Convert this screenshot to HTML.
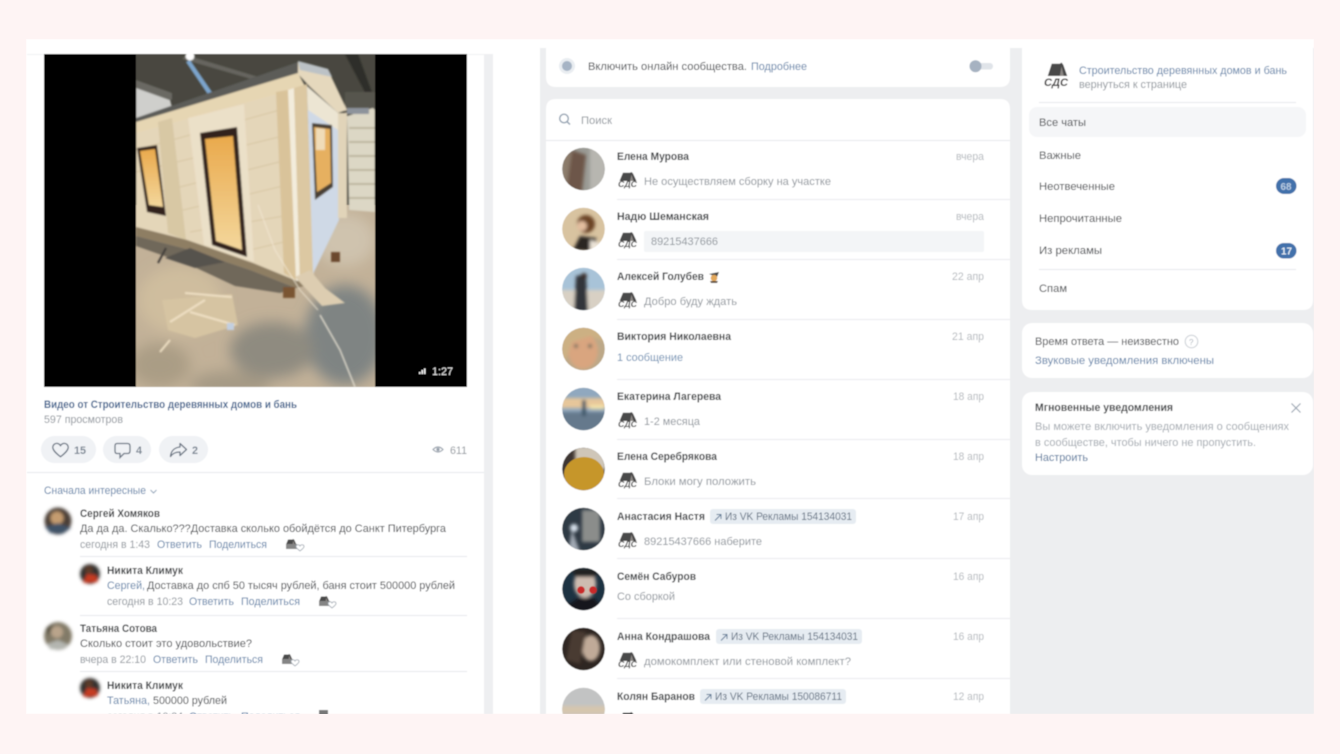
<!DOCTYPE html>
<html lang="ru"><head><meta charset="utf-8"><title>Сообщения сообщества</title>
<style>
html,body{margin:0;padding:0;width:1340px;height:754px;overflow:hidden;background:#fef4f4}
svg{display:block}
text{font-family:"Liberation Sans","Noto Sans CJK SC",sans-serif;font-size:11px;fill:#3c3f44}
.n{font-weight:bold;fill:#3a3d41}
.g{fill:#8f959c}
.l{fill:#b4b8bd}
.b{fill:#5d80a8}
.t{fill:#5f6e80}
.k{font-size:8px;font-weight:bold;font-style:italic;fill:#4a4848}
</style></head><body>
<svg width="1340" height="754" viewBox="0 0 1340 754" xmlns="http://www.w3.org/2000/svg">
<defs>
<filter id="s" x="-2%" y="-2%" width="104%" height="104%"><feGaussianBlur stdDeviation="0.42"/></filter>
<filter id="p" x="-5%" y="-5%" width="110%" height="110%"><feGaussianBlur stdDeviation="0.7"/></filter>
<filter id="w" x="-40%" y="-40%" width="180%" height="180%"><feGaussianBlur stdDeviation="7"/></filter>
<filter id="a" x="-20%" y="-20%" width="140%" height="140%"><feGaussianBlur stdDeviation="1.6"/></filter>
<clipPath id="ph"><rect x="136" y="54" width="239" height="333"/></clipPath>
<clipPath id="page"><rect x="26" y="39" width="1288" height="675"/></clipPath>
<linearGradient id="am" x1="0" y1="0" x2="0" y2="1"><stop offset="0" stop-color="#e9a94c"/><stop offset="1" stop-color="#f4d79c"/></linearGradient>
<g id="lg"><path d="M5 .8 12 .8 13.500 0 15 1.500 18.500 9H1.500z" fill="#4a4848"/><path d="M13.500 2.500 15.500 9H12z" fill="#8b8784"/></g>
</defs>

<g filter="url(#s)" clip-path="url(#page)">
<rect x="26" y="39" width="1288" height="675" fill="#fff"/>
<rect x="540" y="48" width="774" height="666" fill="#edeef0"/>
<rect x="484" y="54" width="9" height="660" fill="#eeeff1"/>
<rect x="27" y="54" width="457" height="1" fill="#f0f1f3"/>

<!-- Video -->
<rect x="44" y="54" width="423" height="333" fill="#000"/>
<g clip-path="url(#ph)">
<rect x="136" y="54" width="239" height="333" fill="#48473f"/>
<rect x="136" y="205" width="239" height="182" fill="#c2b198"/>
<g filter="url(#w)">
<ellipse cx="345" cy="335" rx="40" ry="50" fill="#7f8483"/>
<ellipse cx="272" cy="350" rx="42" ry="28" fill="#8f8b80"/>
<ellipse cx="160" cy="365" rx="30" ry="22" fill="#aa9d85"/>
<ellipse cx="345" cy="240" rx="30" ry="26" fill="#cfc3ae"/>
<ellipse cx="180" cy="300" rx="42" ry="34" fill="#cfbd9e"/>
<ellipse cx="230" cy="385" rx="40" ry="14" fill="#a59a85"/>
</g>
<g filter="url(#p)">
<path d="M136 80 172 93 172 100 136 88z" fill="#6a6963"/>
<path d="M136 88 170 100 172 108 136 120z" fill="#cfcfcc"/>
<path d="M186 55 262 78 258 81 182 59z" fill="#66655f"/>
<path d="M345 54 368 98 374 98 358 54z" fill="#2f2d29"/>
<path d="M190 60 214 95 209 96 186 62z" fill="#7ca4cc"/>
<circle cx="190" cy="56" r="4.500" fill="#fff"/>
<rect x="345" y="92" width="30" height="22" fill="#56544d"/>
<path d="M347 116 373 108 375 110 375 212 349 210z" fill="#dcd7c5"/>
<path d="M349 128H375M349 142H375M349 156H375M349 170H375M349 184H375M349 198H375" stroke="#a99f87" stroke-width="1.500" opacity=".8"/>
<rect x="347" y="108" width="22" height="6" fill="#8d939b"/>
<!-- roof -->
<path d="M136 118 298 62 298 74 136 124z" fill="#5b5c58"/>
<path d="M136 122 298 73 306 88 136 134z" fill="#e6d6b3"/>
<!-- wall -->
<path d="M136 133 306 86 314 278 297 281 253 263 187 240 136 227z" fill="#e4d6b9"/>
<path d="M136 150 287 108M136 172 287 135M160 192 287 160M175 212 287 185M190 232 290 215M250 250 292 240" stroke="#cdb88f" stroke-width="1" opacity=".55"/>
<path d="M158 122 172 118 186 240 168 233z" fill="#d8c8a4"/>
<path d="M188 118 244 104 254 262 204 245z" fill="#ebe0c8"/>
<path d="M276 92 288 90 298 281 284 273z" fill="#d9c39a"/>
<path d="M288 90 294 88 300 281 296 281z" fill="#f3ecdc"/>
<path d="M294 88 307 84 314 278 300 281z" fill="#dcc8a2"/>
<!-- side -->
<path d="M307 86 338 113 339 220 313 274z" fill="#cfd9e6"/>
<path d="M307 86 338 113 338 130 308 110z" fill="#ece5d3"/>
<!-- gable -->
<path d="M298 62 328 70 347 110 338 113 310 87 298 74z" fill="#e5d8bd"/>
<path d="M298 61 328 69 332 77 300 70z" fill="#bcc2c6"/>
<rect x="338" y="113" width="9" height="105" fill="#e1d4b9"/>
<!-- base -->
<path d="M136 227 187 240 253 263 297 281 314 278 314 284 296 288 250 270 190 250 136 236z" fill="#8e7e64"/>
<path d="M136 236 190 250 250 270 296 288 280 293 235 286 190 265 136 246z" fill="#6f675a"/>
<path d="M165 258 190 248 225 262 195 268z" fill="#57534e"/>
<!-- door, windows -->
<path d="M200 133 237 127 247 257 212 245z" fill="#33241a"/>
<path d="M205 139 233 136 242 250 216 241z" fill="url(#am)"/>
<path d="M137 148 157 145 166 216 147 212z" fill="#33241a"/>
<path d="M140 151 155 149 163 207 149 205z" fill="url(#am)"/>
<path d="M312 123 332 125 333 187 315 200z" fill="#4a4034"/>
<path d="M314 127 330 129 331 183 317 192z" fill="#e6b060"/>
<path d="M316 128 325 129 325 150 316 150z" fill="#f0dcb8"/>
<!-- floor details -->
<path d="M295 277 322 306 345 303 325 288 310 270z" fill="#ddcdb1"/>
<path d="M320 315 340 350 355 387" stroke="#e7e1d2" stroke-width="1.300" fill="none"/>
<path d="M258 205 275 250 300 290 318 310" stroke="#f2ead6" stroke-width="1" fill="none" opacity=".8"/>
<path d="M162 300 232 294 238 325 195 338 168 330z" fill="#d6c4a2"/>
<path d="M170 322 205 300M185 293 232 297M190 312 235 325M160 352 170 340" stroke="#efe0c4" stroke-width="2"/>
<rect x="227" y="323" width="7" height="7" fill="#c2cfe0"/>
<path d="M158 263 166 248" stroke="#3d3a37" stroke-width="2"/>
<rect x="283" y="287" width="12" height="11" fill="#7a5533"/><rect x="331" y="252" width="9" height="10" fill="#6c4a2e"/>
</g></g>
<path d="M419 374V372h1.500v2zM421.500 374V370H423v4zM424 374V368.500h1.500V374z" fill="#eee"/>
<text x="432" y="375" textLength="21" lengthAdjust="spacingAndGlyphs" style="fill:#eee">1:27</text>

<text x="44" y="408" textLength="253" lengthAdjust="spacingAndGlyphs" style="font-weight:bold;fill:#3f6490">Видео от Строительство деревянных домов и бань</text>
<text x="44" y="423" textLength="79" lengthAdjust="spacingAndGlyphs" class="g">597 просмотров</text>

<rect x="41" y="436" width="55" height="27" rx="13.500" fill="#f0f2f5"/>
<rect x="103" y="436" width="48" height="27" rx="13.500" fill="#f0f2f5"/>
<rect x="159" y="436" width="49" height="27" rx="13.500" fill="#f0f2f5"/>
<path d="M60.500 456.800C55 452.500 52.800 450 52.800 447.300 52.800 445 54.600 443.400 56.600 443.400 58.200 443.400 59.600 444.200 60.500 445.600 61.400 444.200 62.800 443.400 64.400 443.400 66.400 443.400 68.200 445 68.200 447.300 68.200 450 66 452.500 60.500 456.800Z" fill="none" stroke="#6a7583" stroke-width="1.300"/>
<text x="74" y="454" textLength="12" lengthAdjust="spacingAndGlyphs" style="fill:#7c8794;font-weight:bold">15</text>
<path d="M117 443.500H127.500Q130 443.500 130 446V451Q130 453.500 127.500 453.500H124L120 457.500V453.500H117Q115 453.500 115 451V446Q115 443.500 117 443.500Z" fill="none" stroke="#6a7583" stroke-width="1.300"/>
<text x="136" y="454" textLength="6" lengthAdjust="spacingAndGlyphs" style="fill:#7c8794;font-weight:bold">4</text>
<path d="M180 443.500 186.500 449.500 180 455.500V452C175.500 452 172.500 453.500 170.500 456.500 171 451 174.500 447.500 180 447Z" fill="none" stroke="#6a7583" stroke-width="1.300" stroke-linejoin="round"/>
<text x="192" y="454" textLength="6" lengthAdjust="spacingAndGlyphs" style="fill:#7c8794;font-weight:bold">2</text>
<path d="M433 449.500Q438 444.500 443 449.500 438 454.500 433 449.500Z" fill="none" stroke="#99a2ad" stroke-width="1.200"/><circle cx="438" cy="449.500" r="1.700" fill="#99a2ad"/>
<text x="450" y="454" textLength="17" lengthAdjust="spacingAndGlyphs" class="g">611</text>
<rect x="27" y="472" width="457" height="1" fill="#e7e8ec"/>

<!-- Comments -->
<text x="44" y="494" textLength="102" lengthAdjust="spacingAndGlyphs" class="b">Сначала интересные</text>
<path d="M150.500 490 153.500 493 156.500 490" fill="none" stroke="#8fa3b9" stroke-width="1"/>

<g filter="url(#a)"><circle cx="58" cy="521" r="13.500" fill="#4c4038"/><circle cx="57" cy="518" r="6.500" fill="#c59c70"/><path d="M45 527 58 523 71 528 62 534 50 533z" fill="#3f5368"/></g>
<text x="80" y="517" textLength="80" lengthAdjust="spacingAndGlyphs" class="n">Сергей Хомяков</text>
<text x="80" y="532" textLength="366" lengthAdjust="spacingAndGlyphs">Да да да. Скалько???Доставка сколько обойдётся до Санкт Питербурга</text>
<text x="80" y="548" textLength="70" lengthAdjust="spacingAndGlyphs" class="g">сегодня в 1:43</text>
<text x="157" y="548" textLength="45" lengthAdjust="spacingAndGlyphs" class="b">Ответить</text>
<text x="209" y="548" textLength="58" lengthAdjust="spacingAndGlyphs" class="b">Поделиться</text>
<use href="#lg" transform="translate(285 539) scale(.62)"/><rect x="286" y="544" width="11" height="5" fill="#858585"/>
<path d="M300 551C297.500 549 296 548 296 546.500 296 544.500 299 544 300 546 301 544 304 544.500 304 546.500 304 548 302.500 549 300 551Z" fill="#fff" stroke="#9aa3ad" stroke-width=".8"/>
<rect x="80" y="556" width="387" height="1" fill="#e7e8ec"/>

<g filter="url(#a)"><circle cx="90" cy="574" r="10" fill="#33302f"/><circle cx="89" cy="570" r="4" fill="#5c3a2c"/><path d="M83 583 87 574 96 575 98 582z" fill="#c63b20"/></g>
<text x="107" y="574" textLength="76" lengthAdjust="spacingAndGlyphs" class="n">Никита Климук</text>
<text x="107" y="589" textLength="38" lengthAdjust="spacingAndGlyphs" class="b">Сергей,</text>
<text x="147" y="589" textLength="308" lengthAdjust="spacingAndGlyphs">Доставка до спб 50 тысяч рублей, баня стоит 500000 рублей</text>
<text x="107" y="605" textLength="76" lengthAdjust="spacingAndGlyphs" class="g">сегодня в 10:23</text>
<text x="189" y="605" textLength="45" lengthAdjust="spacingAndGlyphs" class="b">Ответить</text>
<text x="241" y="605" textLength="59" lengthAdjust="spacingAndGlyphs" class="b">Поделиться</text>
<use href="#lg" transform="translate(318 596) scale(.62)"/><rect x="319" y="601" width="11" height="5" fill="#858585"/>
<path d="M332 608C329.500 606 328 605 328 603.500 328 601.500 331 601 332 603 333 601 336 601.500 336 603.500 336 605 334.500 606 332 608Z" fill="#fff" stroke="#9aa3ad" stroke-width=".8"/>
<rect x="80" y="615" width="387" height="1" fill="#e7e8ec"/>

<g filter="url(#a)"><circle cx="58" cy="636" r="14" fill="#827a68"/><circle cx="57" cy="632" r="6" fill="#b9a48b"/><path d="M47 644 58 640 69 645 60 650 50 649z" fill="#b4b6b0"/><path d="M46 628 54 623 48 636z" fill="#54503f"/></g>
<text x="80" y="632" textLength="77" lengthAdjust="spacingAndGlyphs" class="n">Татьяна Сотова</text>
<text x="80" y="647" textLength="172" lengthAdjust="spacingAndGlyphs">Сколько стоит это удовольствие?</text>
<text x="80" y="663" textLength="66" lengthAdjust="spacingAndGlyphs" class="g">вчера в 22:10</text>
<text x="153" y="663" textLength="45" lengthAdjust="spacingAndGlyphs" class="b">Ответить</text>
<text x="205" y="663" textLength="58" lengthAdjust="spacingAndGlyphs" class="b">Поделиться</text>
<use href="#lg" transform="translate(281 654) scale(.62)"/><rect x="282" y="659" width="11" height="5" fill="#858585"/>
<path d="M295 666C292.500 664 291 663 291 661.500 291 659.500 294 659 295 661 296 659 299 659.500 299 661.500 299 663 297.500 664 295 666Z" fill="#fff" stroke="#9aa3ad" stroke-width=".8"/>
<rect x="80" y="671" width="387" height="1" fill="#e7e8ec"/>

<g filter="url(#a)"><circle cx="90" cy="688" r="10" fill="#33302f"/><circle cx="89" cy="684" r="4" fill="#5c3a2c"/><path d="M83 697 87 688 96 689 98 696z" fill="#c63b20"/></g>
<text x="107" y="689" textLength="76" lengthAdjust="spacingAndGlyphs" class="n">Никита Климук</text>
<text x="107" y="704" textLength="43" lengthAdjust="spacingAndGlyphs" class="b">Татьяна,</text>
<text x="153" y="704" textLength="74" lengthAdjust="spacingAndGlyphs">500000 рублей</text>
<text x="107" y="720" textLength="76" lengthAdjust="spacingAndGlyphs" class="g">сегодня в 10:24</text>
<text x="189" y="720" textLength="45" lengthAdjust="spacingAndGlyphs" class="b">Ответить</text>
<text x="241" y="720" textLength="59" lengthAdjust="spacingAndGlyphs" class="b">Поделиться</text>
<rect x="319" y="710" width="9" height="6" fill="#777"/>

<!-- Online -->
<path d="M546 48H1010V77Q1010 87 1000 87H556Q546 87 546 77Z" fill="#fff"/>
<circle cx="567" cy="66" r="8" fill="#e9edf1"/><circle cx="567" cy="66" r="5" fill="#a6b4c5"/>
<text x="588" y="70" textLength="159" lengthAdjust="spacingAndGlyphs">Включить онлайн сообщества.</text>
<text x="751" y="70" textLength="56" lengthAdjust="spacingAndGlyphs" class="b">Подробнее</text>
<rect x="970" y="63" width="23" height="6.500" rx="3.200" fill="#e0e4e9"/><circle cx="975.500" cy="66.300" r="6" fill="#a6b2c1"/>

<!-- List -->
<path d="M546 714V109Q546 99 556 99H1000Q1010 99 1010 109V714Z" fill="#fff"/>
<circle cx="564" cy="118.500" r="4.300" fill="none" stroke="#93a1b1" stroke-width="1.400"/><path d="M567.200 121.800 570 124.500" stroke="#93a1b1" stroke-width="1.500"/>
<text x="581" y="124" textLength="31" lengthAdjust="spacingAndGlyphs" class="g">Поиск</text>
<rect x="546" y="140" width="464" height="1" fill="#e7e8ec"/>
<path d="M617 199.500H1010M617 259.500H1010M617 319.500H1010M617 379.500H1010M617 439.500H1010M617 498.500H1010M617 558.500H1010M617 618.500H1010M617 678.500H1010" stroke="#e9eaee" stroke-width="1"/>

<g><clipPath id="c1"><circle cx="583.500" cy="169" r="21.300"/></clipPath><g clip-path="url(#c1)"><rect x="560" y="146" width="48" height="46" fill="#9a9a94"/><g filter="url(#a)"><path d="M590 146H606V192H590z" fill="#b7b6b0"/><path d="M572 150 586 155 582 192 566 192z" fill="#6d5648"/><path d="M562 150H572L566 192H562z" fill="#8b7a6b"/></g></g></g>
<g><clipPath id="c2"><circle cx="583.500" cy="229" r="21.300"/></clipPath><g clip-path="url(#c2)"><rect x="560" y="206" width="48" height="46" fill="#d8c3a0"/><g filter="url(#a)"><circle cx="586" cy="224" r="9" fill="#6c4528"/><circle cx="582" cy="226" r="5" fill="#e3bd9f"/><path d="M573 250 580 236 596 238 598 252z" fill="#2c2520"/><path d="M590 240 608 245V252H590z" fill="#ece4d8"/></g></g></g>
<g><clipPath id="c3"><circle cx="583.500" cy="289" r="21.300"/></clipPath><g clip-path="url(#c3)"><rect x="560" y="266" width="48" height="46" fill="#a8c3d8"/><g filter="url(#a)"><rect x="560" y="290" width="48" height="22" fill="#d8d0c4"/><path d="M576 276 586 274 588 312 574 312z" fill="#33343a"/><circle cx="584" cy="276" r="3" fill="#3a2f2a"/></g></g></g>
<g><clipPath id="c4"><circle cx="583.500" cy="349" r="21.300"/></clipPath><g clip-path="url(#c4)"><rect x="560" y="326" width="48" height="46" fill="#bca888"/><g filter="url(#a)"><ellipse cx="583" cy="351" rx="15" ry="18" fill="#d9a57f"/><path d="M562 326H606V342L590 336 572 342 566 360H562z" fill="#ccb083"/><circle cx="576" cy="346" r="2" fill="#6f6d60"/><circle cx="590" cy="346" r="2" fill="#6f6d60"/></g></g></g>
<g><clipPath id="c5"><circle cx="583.500" cy="409" r="21.300"/></clipPath><g clip-path="url(#c5)"><rect x="560" y="386" width="48" height="46" fill="#90a8bf"/><g filter="url(#a)"><rect x="560" y="398" width="48" height="10" fill="#e6c69a"/><rect x="560" y="412" width="48" height="20" fill="#65798c"/><rect x="582" y="400" width="4" height="16" fill="#3f5668"/><rect x="590" y="405" width="14" height="4" fill="#f5e3a8"/></g></g></g>
<g><clipPath id="c6"><circle cx="583.500" cy="469" r="21.300"/></clipPath><g clip-path="url(#c6)"><rect x="560" y="446" width="48" height="46" fill="#3e3530"/><path d="M575 446H606V470H575z" fill="#cfc6b8" filter="url(#a)"/><ellipse cx="584" cy="474" rx="20" ry="17" fill="#c6962c"/></g></g>
<g><clipPath id="c7"><circle cx="583.500" cy="529" r="21.300"/></clipPath><g clip-path="url(#c7)"><rect x="560" y="506" width="48" height="46" fill="#2f3a44"/><g filter="url(#a)"><rect x="582" y="510" width="18" height="32" fill="#8b8d8b"/><circle cx="574" cy="528" r="4" fill="#d6e0ea"/><path d="M572 530 568 552H580z" fill="#a1a9b3"/></g></g></g>
<g><clipPath id="c8"><circle cx="583.500" cy="589" r="21.300"/></clipPath><g clip-path="url(#c8)"><rect x="560" y="566" width="48" height="46" fill="#1f3342"/><g filter="url(#a)"><ellipse cx="585" cy="584" rx="11" ry="14" fill="#cdbcb0"/><path d="M572 569 598 569 596 577 575 577z" fill="#222"/><path d="M566 606 578 598 594 598 606 612H566z" fill="#15181a"/></g><circle cx="581" cy="590" r="3.800" fill="#c92a2a"/><circle cx="593" cy="590" r="3.800" fill="#c92a2a"/></g></g>
<g><clipPath id="c9"><circle cx="583.500" cy="649" r="21.300"/></clipPath><g clip-path="url(#c9)"><rect x="560" y="626" width="48" height="46" fill="#2e2622"/><g filter="url(#a)"><ellipse cx="591" cy="648" rx="9" ry="13" fill="#c0aa98"/><path d="M572 630 586 632 580 664 566 660z" fill="#4a3a30"/></g></g></g>
<g><clipPath id="c10"><circle cx="583.500" cy="709" r="21.300"/></clipPath><g clip-path="url(#c10)"><rect x="560" y="686" width="48" height="28" fill="#c2c3c3"/><rect x="560" y="706" width="48" height="8" fill="#d5c6ae" filter="url(#a)"/></g></g>

<!-- names -->
<text x="617" y="160" textLength="72" lengthAdjust="spacingAndGlyphs" class="n">Елена Мурова</text>
<text x="617" y="220" textLength="92" lengthAdjust="spacingAndGlyphs" class="n">Надю Шеманская</text>
<text x="617" y="280" textLength="87" lengthAdjust="spacingAndGlyphs" class="n">Алексей Голубев</text>
<path d="M709 274 719 272 717 277 714 276z" fill="#4a4a48"/><circle cx="714" cy="278" r="3.300" fill="#e2a85c"/><path d="M710 281H718L717 283H711z" fill="#5a4a3a"/>
<text x="617" y="340" textLength="114" lengthAdjust="spacingAndGlyphs" class="n">Виктория Николаевна</text>
<text x="617" y="400" textLength="104" lengthAdjust="spacingAndGlyphs" class="n">Екатерина Лагерева</text>
<text x="617" y="460" textLength="100" lengthAdjust="spacingAndGlyphs" class="n">Елена Серебрякова</text>
<text x="617" y="520" textLength="88" lengthAdjust="spacingAndGlyphs" class="n">Анастасия Настя</text>
<text x="617" y="580" textLength="79" lengthAdjust="spacingAndGlyphs" class="n">Семён Сабуров</text>
<text x="617" y="640" textLength="93" lengthAdjust="spacingAndGlyphs" class="n">Анна Кондрашова</text>
<text x="617" y="700" textLength="78" lengthAdjust="spacingAndGlyphs" class="n">Колян Баранов</text>

<!-- dates -->
<text x="956" y="160" textLength="28" lengthAdjust="spacingAndGlyphs" class="l">вчера</text>
<text x="956" y="220" textLength="28" lengthAdjust="spacingAndGlyphs" class="l">вчера</text>
<text x="952" y="280" textLength="32" lengthAdjust="spacingAndGlyphs" class="l">22 апр</text>
<text x="952" y="340" textLength="32" lengthAdjust="spacingAndGlyphs" class="l">21 апр</text>
<text x="953" y="400" textLength="31" lengthAdjust="spacingAndGlyphs" class="l">18 апр</text>
<text x="953" y="460" textLength="31" lengthAdjust="spacingAndGlyphs" class="l">18 апр</text>
<text x="953" y="520" textLength="31" lengthAdjust="spacingAndGlyphs" class="l">17 апр</text>
<text x="953" y="580" textLength="31" lengthAdjust="spacingAndGlyphs" class="l">16 апр</text>
<text x="953" y="640" textLength="31" lengthAdjust="spacingAndGlyphs" class="l">16 апр</text>
<text x="953" y="700" textLength="31" lengthAdjust="spacingAndGlyphs" class="l">12 апр</text>

<!-- tags -->
<rect x="710" y="509" width="146" height="15" rx="3" fill="#e6ecf2"/>
<path d="M715 520.500 721 514.500M716.500 514.500H721V519" fill="none" stroke="#5f7a96" stroke-width="1"/>
<text x="725" y="520" textLength="127" lengthAdjust="spacingAndGlyphs" class="t">Из VK Рекламы 154134031</text>
<rect x="716" y="629" width="146" height="15" rx="3" fill="#e6ecf2"/>
<path d="M721 640.500 727 634.500M722.500 634.500H727V639" fill="none" stroke="#5f7a96" stroke-width="1"/>
<text x="731" y="640" textLength="127" lengthAdjust="spacingAndGlyphs" class="t">Из VK Рекламы 154134031</text>
<rect x="700" y="689" width="146" height="15" rx="3" fill="#e6ecf2"/>
<path d="M705 700.500 711 694.500M706.500 694.500H711V699" fill="none" stroke="#5f7a96" stroke-width="1"/>
<text x="715" y="700" textLength="127" lengthAdjust="spacingAndGlyphs" class="t">Из VK Рекламы 150086711</text>

<!-- messages -->
<use href="#lg" x="618" y="172"/><text x="618" y="187" textLength="19" lengthAdjust="spacingAndGlyphs" class="k">СДС</text>
<text x="644" y="185" textLength="187" lengthAdjust="spacingAndGlyphs" class="g">Не осуществляем сборку на участке</text>
<use href="#lg" x="618" y="232"/><text x="618" y="247" textLength="19" lengthAdjust="spacingAndGlyphs" class="k">СДС</text>
<rect x="644" y="231" width="340" height="21" rx="2" fill="#f3f5f7"/>
<text x="651" y="245" textLength="67" lengthAdjust="spacingAndGlyphs" class="g">89215437666</text>
<use href="#lg" x="618" y="292"/><text x="618" y="307" textLength="19" lengthAdjust="spacingAndGlyphs" class="k">СДС</text>
<text x="644" y="305" textLength="93" lengthAdjust="spacingAndGlyphs" class="g">Добро буду ждать</text>
<text x="617" y="361" textLength="66" lengthAdjust="spacingAndGlyphs" style="fill:#6d8fb3">1 сообщение</text>
<use href="#lg" x="618" y="412"/><text x="618" y="427" textLength="19" lengthAdjust="spacingAndGlyphs" class="k">СДС</text>
<text x="644" y="425" textLength="56" lengthAdjust="spacingAndGlyphs" class="g">1-2 месяца</text>
<use href="#lg" x="618" y="472"/><text x="618" y="487" textLength="19" lengthAdjust="spacingAndGlyphs" class="k">СДС</text>
<text x="644" y="485" textLength="112" lengthAdjust="spacingAndGlyphs" class="g">Блоки могу положить</text>
<use href="#lg" x="618" y="532"/><text x="618" y="547" textLength="19" lengthAdjust="spacingAndGlyphs" class="k">СДС</text>
<text x="644" y="545" textLength="118" lengthAdjust="spacingAndGlyphs" class="g">89215437666 наберите</text>
<text x="617" y="600" textLength="58" lengthAdjust="spacingAndGlyphs" class="g">Со сборкой</text>
<use href="#lg" x="618" y="652"/><text x="618" y="667" textLength="19" lengthAdjust="spacingAndGlyphs" class="k">СДС</text>
<text x="644" y="665" textLength="207" lengthAdjust="spacingAndGlyphs" class="g">домокомплект или стеновой комплект?</text>
<use href="#lg" x="618" y="712"/>

<!-- Right menu -->
<path d="M1022 48H1313V300Q1313 310 1303 310H1032Q1022 310 1022 300Z" fill="#fff"/>
<use href="#lg" transform="translate(1046 62.500) scale(1.150 1.500)"/>
<text x="1044" y="86" textLength="24" lengthAdjust="spacingAndGlyphs" style="font-size:11px;font-weight:bold;font-style:italic;fill:#3f3d3d">СДС</text>
<text x="1079" y="74" textLength="208" lengthAdjust="spacingAndGlyphs" class="b">Строительство деревянных домов и бань</text>
<text x="1079" y="88" textLength="108" lengthAdjust="spacingAndGlyphs" class="g">вернуться к странице</text>
<rect x="1039" y="102" width="257" height="1" fill="#e7e8ec"/>
<rect x="1029" y="107" width="277" height="30" rx="8" fill="#f5f6f8"/>
<text x="1039" y="126" textLength="47" lengthAdjust="spacingAndGlyphs">Все чаты</text>
<text x="1039" y="159" textLength="42" lengthAdjust="spacingAndGlyphs">Важные</text>
<text x="1039" y="190" textLength="76" lengthAdjust="spacingAndGlyphs">Неотвеченные</text>
<text x="1039" y="222" textLength="83" lengthAdjust="spacingAndGlyphs">Непрочитанные</text>
<text x="1039" y="254" textLength="63" lengthAdjust="spacingAndGlyphs">Из рекламы</text>
<rect x="1276" y="178" width="20.500" height="16" rx="8" fill="#4271ab"/>
<text x="1280.500" y="190" textLength="11" lengthAdjust="spacingAndGlyphs" style="font-size:10px;font-weight:bold;fill:#b9cce2">68</text>
<rect x="1276" y="243" width="20.500" height="15.500" rx="7.800" fill="#4271ab"/>
<text x="1281" y="254.500" textLength="11" lengthAdjust="spacingAndGlyphs" style="font-size:10px;font-weight:bold;fill:#e6eef6">17</text>
<rect x="1039" y="269" width="257" height="1" fill="#e7e8ec"/>
<text x="1039" y="292" textLength="28" lengthAdjust="spacingAndGlyphs">Спам</text>

<rect x="1022" y="323" width="291" height="55" rx="10" fill="#fff"/>
<text x="1035" y="345" textLength="144" lengthAdjust="spacingAndGlyphs">Время ответа — неизвестно</text>
<circle cx="1191.500" cy="341.500" r="6.300" fill="none" stroke="#c9ced4" stroke-width="1"/>
<text x="1189" y="345" style="font-size:8px;fill:#aab2bb">?</text>
<text x="1035" y="364" textLength="179" lengthAdjust="spacingAndGlyphs" class="b">Звуковые уведомления включены</text>

<rect x="1022" y="392" width="291" height="83" rx="10" fill="#fff"/>
<text x="1035" y="411" textLength="138" lengthAdjust="spacingAndGlyphs" class="n">Мгновенные уведомления</text>
<path d="M1291.500 403.500 1300.500 412.500M1300.500 403.500 1291.500 412.500" stroke="#9aa5b2" stroke-width="1.200"/>
<text x="1035" y="430" textLength="254" lengthAdjust="spacingAndGlyphs" style="fill:#a3a9b0">Вы можете включить уведомления о сообщениях</text>
<text x="1035" y="446" textLength="221" lengthAdjust="spacingAndGlyphs" style="fill:#a3a9b0">в сообществе, чтобы ничего не пропустить.</text>
<text x="1035" y="461" textLength="53" lengthAdjust="spacingAndGlyphs" style="fill:#4a6f98">Настроить</text>
</g>
</svg>
</body></html>
